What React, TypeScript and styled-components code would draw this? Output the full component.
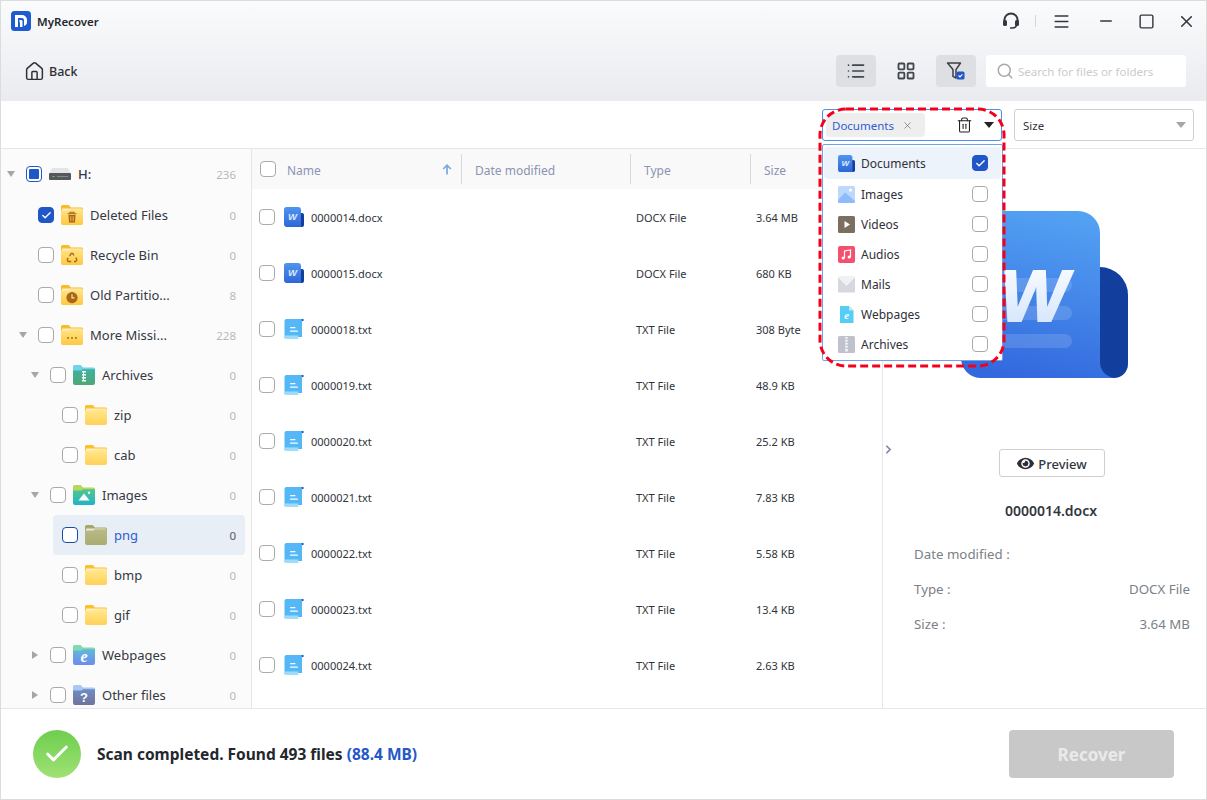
import { useId, type ReactNode } from "react";
import styled, { createGlobalStyle } from "styled-components";
import { Check, ChevronRight, House, LayoutGrid, List, Menu, Minus, Search, Square, Trash2, X } from "lucide-react";
import { FaEye } from "react-icons/fa";

const GlobalStyle = createGlobalStyle`
  * { box-sizing: border-box; }
  html, body { margin: 0; padding: 0; background: #fff; }
  body { font-family: "Noto Sans", "Open Sans", sans-serif; color: #2b2f38; }
`;

const Window = styled.div`
  position: relative;
  width: 1207px;
  height: 800px;
  display: flex;
  flex-direction: column;
  border: 1px solid #dcdcdc;
  overflow: hidden;
  background: #fff;
`;

const Header = styled.header`
  height: 100px;
  flex: none;
  background: linear-gradient(180deg, #fafbfc 0%, #e9ebef 100%);
`;

const TitleBar = styled.div`
  height: 40px;
  display: flex;
  align-items: center;
  padding-left: 10px;
`;

const Brand = styled.div`
  display: flex;
  align-items: center;
  gap: 6px;
  font-size: 11.5px;
  font-weight: 600;
  color: #25272e;
  flex: 1;
`;

const WinControls = styled.div`
  display: flex;
  align-items: center;
  color: #34373e;
  padding-right: 10px;
`;

const Separator = styled.span`
  width: 1px;
  height: 12px;
  background: #d4d6da;
  margin: 0 16px 0 15px;
`;

const ControlSlot = styled.span<{ $gap?: number }>`
  display: flex;
  margin-left: ${(p) => p.$gap ?? 0}px;
`;

const ToolBar = styled.div`
  height: 60px;
  display: flex;
  align-items: flex-start;
  padding: 14px 20px 0 23px;
`;

const BackLink = styled.div`
  display: flex;
  align-items: center;
  gap: 4px;
  font-size: 12.5px;
  font-weight: 500;
  color: #2e3038;
  height: 32px;
  flex: 1;
`;

const ViewButton = styled.button<{ $active?: boolean }>`
  width: 40px;
  height: 32px;
  margin-right: 10px;
  border: 0;
  padding: 0;
  border-radius: 4px;
  display: flex;
  align-items: center;
  justify-content: center;
  color: #43464d;
  background: ${(p) => (p.$active ? "#dddfe3" : "transparent")};
`;

const SearchBox = styled.div`
  width: 200px;
  height: 32px;
  background: #fff;
  border-radius: 3px;
  display: flex;
  align-items: center;
  gap: 4px;
  padding-left: 10px;
  font-size: 11.5px;
  color: #cbcbcb;
`;

const FilterBar = styled.div`
  position: relative;
  z-index: 3;
  height: 48px;
  flex: none;
  background: #fff;
  border-bottom: 1px solid #e6e6ea;
  display: flex;
  justify-content: flex-end;
  gap: 12px;
  padding: 8px 12px 0 0;
`;

const MultiSelectWrap = styled.div`
  position: relative;
  width: 180px;
`;

const SelectBox = styled.div<{ $open?: boolean }>`
  width: 180px;
  height: 32px;
  border: 1px solid ${(p) => (p.$open ? "#4a90ee" : "#cfcfcf")};
  border-radius: 3px;
  display: flex;
  align-items: center;
  padding: 0 7px 0 3px;
  font-size: 11.5px;
`;

const Tag = styled.div`
  width: 99px;
  height: 24px;
  flex: none;
  border-radius: 4px;
  background: #eeeeee;
  color: #2f5cd5;
  display: flex;
  align-items: center;
  justify-content: space-between;
  padding: 0 12px 0 6px;
  font-size: 11.5px;
`;

const TagClose = styled(X)`
  color: #6f6f6f;
`;

const TrashIcon = styled(Trash2)`
  margin-left: 31px;
  color: #222;
`;

const Caret = styled.span<{ $tone?: string }>`
  width: 0;
  height: 0;
  border-left: 5px solid transparent;
  border-right: 5px solid transparent;
  border-top: 6px solid ${(p) => p.$tone ?? "#222"};
`;

const BlackCaret = styled(Caret)`
  margin-left: 11px;
`;

const SizeText = styled.span`
  flex: 1;
  padding-left: 5px;
  color: #33363d;
`;

const Dropdown = styled.div`
  position: absolute;
  top: 35px;
  left: 0;
  width: 181px;
  height: 217px;
  background: #fff;
  border: 1px solid #6fa3ec;
  border-radius: 2px;
  padding: 2px 1px;
`;

const OptionRow = styled.div<{ $selected?: boolean }>`
  height: ${(p) => (p.$selected ? "32px" : "30px")};
  display: flex;
  align-items: center;
  gap: 6px;
  padding: 0 13px 0 14px;
  border-radius: 4px;
  font-size: 12px;
  color: #2e3038;
  background: ${(p) => (p.$selected ? "#edf3fb" : "transparent")};
`;

const OptionLabel = styled.span`
  flex: 1;
`;

const Annotation = styled.svg`
  position: absolute;
  left: -4px;
  top: -2px;
  pointer-events: none;
`;

const Body = styled.div`
  flex: 1;
  min-height: 0;
  display: flex;
  overflow: hidden;
`;

const TreePanel = styled.aside`
  width: 251px;
  flex: none;
  background: #fbfbfb;
  border-right: 1px solid #e6e6ea;
  padding-top: 5px;
`;

const TreeRow = styled.div<{ $level: number }>`
  height: 40px;
  flex: none;
  display: flex;
  align-items: center;
  padding-left: ${(p) => 6 + p.$level * 12}px;
  margin-bottom: ${(p) => (p.$level === 0 ? "1px" : "0")};
`;

const CaretSlot = styled.span`
  width: 10px;
  flex: none;
  display: flex;
`;

const GrayDown = styled.span`
  width: 0;
  height: 0;
  border-left: 4px solid transparent;
  border-right: 4px solid transparent;
  border-top: 6px solid #a6a6a6;
`;

const GrayRight = styled.span`
  width: 0;
  height: 0;
  margin-left: 1px;
  border-top: 4px solid transparent;
  border-bottom: 4px solid transparent;
  border-left: 6px solid #a6a6a6;
`;

const RowBody = styled.div<{ $selected?: boolean }>`
  flex: 1;
  min-width: 0;
  height: 40px;
  margin-right: 6px;
  display: flex;
  align-items: center;
  gap: 7px;
  padding: 0 9px;
  border-radius: 4px;
  background: ${(p) => (p.$selected ? "#e8eef6" : "transparent")};
`;

const TreeLabel = styled.span<{ $selected?: boolean; $strong?: boolean }>`
  flex: 1;
  font-size: 13px;
  white-space: nowrap;
  font-weight: ${(p) => (p.$strong ? 500 : 400)};
  color: ${(p) => (p.$selected ? "#2f5cd5" : "#343842")};
`;

const Count = styled.span<{ $selected?: boolean }>`
  font-size: 11.5px;
  color: ${(p) => (p.$selected ? "#55585f" : "#b9b9b9")};
`;

const Box = styled.span<{ $checked?: boolean; $partial?: boolean; $focus?: boolean }>`
  width: 16px;
  height: 16px;
  flex: none;
  border-radius: 4px;
  display: flex;
  align-items: center;
  justify-content: center;
  color: #fff;
  background: ${(p) => (p.$checked ? "#2056c8" : "#fff")};
  border: 1px solid
    ${(p) => (p.$checked || p.$partial ? "#2056c8" : p.$focus ? "#1c4aa8" : "#aaaaaa")};
`;

const BoxDot = styled.span`
  width: 10px;
  height: 10px;
  border-radius: 1px;
  background: #2056c8;
`;

const TablePanel = styled.section`
  width: 631px;
  flex: none;
  border-right: 1px solid #e6e6ea;
`;

const TableHead = styled.div`
  height: 40px;
  background: #f9f9f9;
  display: grid;
  grid-template-columns: 210px 169px 120px 1fr;
  font-size: 12px;
  color: #8b93b3;
`;

const HeadCell = styled.div<{ $first?: boolean }>`
  display: flex;
  align-items: center;
  padding-left: ${(p) => (p.$first ? "8px" : "13px")};
  gap: 11px;
  position: relative;
  &:not(:last-child)::after {
    content: "";
    position: absolute;
    right: 0;
    top: 5px;
    bottom: 5px;
    width: 1px;
    background: #d6d8de;
  }
`;

const HeadText = styled.span<{ $grow?: boolean }>`
  padding-top: 2px;
  flex: ${(p) => (p.$grow ? 1 : "none")};
`;

const SortArrow = styled.svg`
  margin-right: 10px;
`;

const FileRow = styled.div`
  height: 56px;
  display: grid;
  grid-template-columns: 384px 120px 1fr;
  align-items: center;
  font-size: 11px;
  color: #30343c;
`;

const NameCell = styled.div`
  display: flex;
  align-items: center;
  padding-left: 7px;
  gap: 9px;
`;

const FileName = styled.span`
  margin-left: -2px;
`;

const PreviewPanel = styled.section`
  position: relative;
  flex: 1;
  padding: 62px 16px 0 31px;
  display: flex;
  flex-direction: column;
  align-items: center;
`;

const BigIcon = styled.svg`
  margin-right: 15px;
  flex: none;
`;

const CollapseHandle = styled(ChevronRight)`
  position: absolute;
  left: -1px;
  top: 294px;
  color: #7b85a6;
`;

const PreviewButton = styled.button`
  width: 106px;
  height: 28px;
  margin-top: 71px;
  border: 1px solid #cfcfcf;
  border-radius: 3px;
  background: #fff;
  display: flex;
  align-items: center;
  justify-content: center;
  gap: 4px;
  font: 500 13px "Noto Sans", sans-serif;
  color: #33363d;
  padding: 1px 0 0;
`;

const PreviewName = styled.div`
  margin-top: 24px;
  margin-right: 2px;
  font-size: 14px;
  font-weight: 600;
  color: #33363d;
`;

const MetaList = styled.dl`
  width: 100%;
  margin: 16px 0 0;
  font-size: 13.3px;
  color: #7c7f87;
`;

const MetaRow = styled.div`
  height: 35px;
  display: flex;
  justify-content: space-between;
  align-items: center;
`;

const MetaTerm = styled.dt``;

const MetaValue = styled.dd`
  margin: 0;
`;

const Footer = styled.footer`
  height: 91px;
  flex: none;
  border-top: 1px solid #e6e6ea;
  display: flex;
  align-items: center;
  padding: 0 32px;
`;

const SuccessBadge = styled.span`
  width: 48px;
  height: 48px;
  border-radius: 50%;
  background: linear-gradient(180deg, #6dce4e 0%, #9fe274 100%);
  display: flex;
  align-items: center;
  justify-content: center;
  color: #fff;
`;

const Status = styled.div`
  flex: 1;
  margin-left: 16px;
  font-size: 15.5px;
  font-weight: 700;
  color: #24272e;
`;

const StatusSize = styled.span`
  color: #2458c8;
`;

const RecoverButton = styled.button`
  width: 165px;
  height: 48px;
  border: 0;
  padding: 1px 0 0;
  border-radius: 4px;
  background: #c8c8c8;
  color: #eaeaea;
  font: 700 17px "Noto Sans", sans-serif;
`;

const Logo = () => (
  <svg width="20" height="20" viewBox="0 0 20 20">
    <rect width="20" height="20" rx="3.5" fill="#1f5bd0" />
    <path d="M4 4h7a5 5 0 0 1 5 5v2a4 4 0 0 1-3 3.9V9a2 2 0 0 0-2-2H7v9H4z" fill="#fff" />
    <path d="M8.5 9h1.6a1.4 1.4 0 0 1 1.4 1.4V16H9v-4.6H8.5z" fill="#fff" />
  </svg>
);

const Headset = () => (
  <svg width="18" height="18" viewBox="0 0 18 18" fill="none">
    <path d="M2.4 9.5V8a6.6 6.6 0 0 1 13.2 0v1.5" stroke="#34373e" strokeWidth="2" />
    <rect x="1" y="8" width="4" height="6" rx="1.6" fill="#34373e" />
    <rect x="13" y="8" width="4" height="6" rx="1.6" fill="#34373e" />
    <path d="M14.5 13.5c-.6 1.6-2 2.5-4 2.5H8" stroke="#34373e" strokeWidth="1.6" />
  </svg>
);

const FilterChecked = () => (
  <svg width="20" height="20" viewBox="0 0 20 20" fill="none">
    <path d="M1.5 2h13L10 8.6V17l-3-1.6V8.6z" stroke="#3c3f46" strokeWidth="1.5" strokeLinejoin="round" />
    <rect x="10.5" y="10.5" width="8" height="8" rx="1.6" fill="#2056c8" />
    <path d="M12.6 14.5l1.4 1.4 2.4-2.6" stroke="#fff" strokeWidth="1.1" />
  </svg>
);

const Drive = () => (
  <svg width="22" height="12" viewBox="0 0 22 12">
    <path d="M3 0h16l3 6H0z" fill="#e4e5e7" />
    <rect y="5" width="22" height="7" rx="1" fill="#55575c" />
    <rect x="3.5" y="8" width="2" height="1" fill="#58d65f" />
    <rect x="8" y="8" width="11" height="1" fill="#85878c" />
  </svg>
);

type FolderProps = { tab: string; top: string; bottom: string; sheet?: boolean; children?: ReactNode };

const Folder = ({ tab, top, bottom, sheet = true, children }: FolderProps) => {
  const id = useId();
  return (
    <svg width="22" height="20" viewBox="0 0 22 20" style={{ flex: "none" }}>
      <defs>
        <linearGradient id={id} x1="0" y1="0" x2="0" y2="1">
          <stop offset="0" stopColor={top} />
          <stop offset="1" stopColor={bottom} />
        </linearGradient>
      </defs>
      <path d="M1.5 0h6.2l2.3 2.5h10.5A1.5 1.5 0 0 1 22 4v3H0V1.5A1.5 1.5 0 0 1 1.5 0z" fill={tab} />
      {sheet && <rect x="1" y="3.5" width="20" height="3" rx="0.6" fill="#fff" opacity="0.75" />}
      <path d="M0 5.5h8.5l1.2-1.3H22V18a2 2 0 0 1-2 2H2a2 2 0 0 1-2-2z" fill={`url(#${id})`} />
      {children}
    </svg>
  );
};

const yellow = { tab: "#fcbc27", top: "#ffe487", bottom: "#ffc83f" };
const plain = { tab: "#fdbf2d", top: "#ffe98f", bottom: "#ffd157" };

const treeIcons: Record<string, ReactNode> = {
  deleted: (
    <Folder {...yellow}>
      <path d="M6.5 8.8h9M9 8.8V7.2h4v1.6" stroke="#a9651c" strokeWidth="1.1" fill="none" />
      <path d="M7.5 10h7l-.5 7.5H8z" fill="#a9651c" />
      <path d="M9.8 11.2v5M12.2 11.2v5" stroke="#ffd66b" strokeWidth="0.8" />
    </Folder>
  ),
  recycle: (
    <Folder {...yellow}>
      <path d="M8.6 11.2L10.2 8.5h1.6l1.2 2M14.8 12.6l1 2.2-1 1.7h-1.8M10.2 16.5H7.2l-1-1.7 1-2" stroke="#a9651c" strokeWidth="1.3" fill="none" />
    </Folder>
  ),
  clock: (
    <Folder {...yellow}>
      <circle cx="11" cy="12.6" r="5.6" fill="#a9651c" />
      <path d="M11 9.2v3.6h2.6" stroke="#ffe08a" strokeWidth="1.2" fill="none" />
    </Folder>
  ),
  more: (
    <Folder {...yellow}>
      <rect x="6.2" y="12" width="1.8" height="1.8" rx="0.4" fill="#a9651c" />
      <rect x="10.1" y="12" width="1.8" height="1.8" rx="0.4" fill="#a9651c" />
      <rect x="14" y="12" width="1.8" height="1.8" rx="0.4" fill="#a9651c" />
    </Folder>
  ),
  archives: (
    <Folder tab="#6fd3ea" top="#3fb1a0" bottom="#4fa775" sheet={false}>
      <path d="M9 6h4v1.6H11v1.4h2v1.6h-2V12h2v1.6h-2V15h2v1.6H9V15h1v-1.4H9V12h1v-1.4H9V9h1V7.6H9z" fill="#fff" />
    </Folder>
  ),
  images: (
    <Folder tab="#b5d85f" top="#54c58e" bottom="#1fb4c6" sheet={false}>
      <path d="M5.5 15.5L11 8.5l5.5 7z" fill="#fff" />
      <circle cx="16" cy="7.8" r="1.2" fill="#fff" />
    </Folder>
  ),
  webpages: (
    <Folder tab="#83d9b3" top="#62b9d6" bottom="#6e8cee" sheet={false}>
      <text x="11" y="17" textAnchor="middle" fontFamily="Liberation Serif" fontStyle="italic" fontWeight="700" fontSize="16" fill="#fff">e</text>
    </Folder>
  ),
  other: (
    <Folder tab="#a9c8f2" top="#6f8bc6" bottom="#70749a" sheet={false}>
      <text x="11" y="17" textAnchor="middle" fontFamily="Liberation Sans" fontWeight="700" fontSize="13" fill="#fff">?</text>
    </Folder>
  ),
  folder: <Folder {...plain} />,
  folderActive: <Folder tab="#a8a66c" top="#b9bb85" bottom="#a8ab72" />,
};

const WordSmall = ({ size }: { size: number }) => {
  const id = useId();
  return (
    <svg width={size} height={size} viewBox="0 0 20 20" style={{ flex: "none" }}>
      <defs>
        <linearGradient id={id} x1="0" y1="0" x2="0" y2="1">
          <stop offset="0" stopColor="#4f95ef" />
          <stop offset="1" stopColor="#2f66d8" />
        </linearGradient>
      </defs>
      <rect x="15" y="6" width="5" height="14" rx="2" fill="#123f9e" />
      <path d="M2.5 0h11.5a3 3 0 0 1 3 3v17H3a3 3 0 0 1-3-3V2.5A2.5 2.5 0 0 1 2.5 0z" fill={`url(#${id})`} />
      <text x="8.5" y="12.5" textAnchor="middle" fontFamily="Liberation Sans" fontStyle="italic" fontWeight="700" fontSize="9.5" fill="#dfeafc">W</text>
    </svg>
  );
};

const TxtIcon = () => (
  <svg width="20" height="20" viewBox="0 0 20 20" style={{ flex: "none" }}>
    <path d="M2.5 0H19a1 1 0 0 1-1 2v16H2a2 2 0 0 1-1.5-2V2a2 2 0 0 1 2-2z" fill="#54b8f8" />
    <rect x="17.6" y="0" width="2" height="2" rx="0.8" fill="#2056c8" />
    <path d="M0 16.4h14.6a2 2 0 0 0 1 3.6H2a2 2 0 0 1-2-2z" fill="#9fdcfb" />
    <rect x="6" y="8" width="5.5" height="1.3" rx="0.6" fill="#fff" />
    <rect x="6" y="11.4" width="8" height="1.3" rx="0.6" fill="#fff" />
  </svg>
);

const OptionIcon = ({ kind }: { kind: string }) => {
  const paint: Record<string, ReactNode> = {
    Documents: <WordSmall size={17} />,
    Images: (
      <svg width="17" height="17" viewBox="0 0 17 17">
        <rect width="17" height="17" rx="1.5" fill="#bcd9fd" />
        <path d="M0 14l7-7.5L17 15v.5a1.5 1.5 0 0 1-1.5 1.5h-14A1.5 1.5 0 0 1 0 15.5z" fill="#8ebcfb" />
        <circle cx="12.5" cy="4" r="1.6" fill="#fff" />
      </svg>
    ),
    Videos: (
      <svg width="17" height="17" viewBox="0 0 17 17">
        <rect width="17" height="17" rx="1.5" fill="#7b6f60" />
        <path d="M6.5 5l5.5 3.5L6.5 12z" fill="#fff" />
      </svg>
    ),
    Audios: (
      <svg width="17" height="17" viewBox="0 0 17 17">
        <rect width="17" height="17" rx="2" fill="#f4506f" />
        <path d="M6.5 12V5l6-1v7" stroke="#fff" strokeWidth="1.2" fill="none" />
        <circle cx="5.2" cy="12" r="1.6" fill="#fff" />
        <circle cx="11.2" cy="11" r="1.6" fill="#fff" />
      </svg>
    ),
    Mails: (
      <svg width="17" height="17" viewBox="0 0 17 17">
        <rect y="0.5" width="17" height="16" rx="1" fill="#d5d8df" />
        <path d="M0 1h17L8.5 9.5z" fill="#eef0f3" stroke="#fafbfc" strokeWidth="0.6" />
      </svg>
    ),
    Webpages: (
      <svg width="17" height="17" viewBox="0 0 17 17">
        <path d="M2 0h9l4.5 4.5V17H2z" fill="#56cdf5" />
        <path d="M11 0l4.5 4.5H11z" fill="#bdeafb" />
        <text x="8.8" y="13" textAnchor="middle" fontFamily="Liberation Serif" fontStyle="italic" fontWeight="700" fontSize="11" fill="#fff">e</text>
      </svg>
    ),
    Archives: (
      <svg width="17" height="17" viewBox="0 0 17 17">
        <rect width="17" height="17" rx="1.5" fill="#bfc2cd" />
        <path d="M7 1h3v1.6H8.5V4H10v1.6H8.5V7H10v1.6H8.5V10H10v1.6H8.5V13H10v2.5H7V13h.8v-1.4H7V10h.8V8.6H7V7h.8V5.6H7V4h.8V2.6H7z" fill="#eceef2" />
      </svg>
    ),
  };
  return <>{paint[kind]}</>;
};

const WordLarge = () => {
  const body = useId();
  const letter = useId();
  return (
    <BigIcon width="167" height="167" viewBox="0 0 167 167">
      <defs>
        <linearGradient id={body} x1="0.6" y1="0" x2="0.4" y2="1">
          <stop offset="0" stopColor="#53a1f3" />
          <stop offset="1" stopColor="#3369de" />
        </linearGradient>
        <linearGradient id={letter} x1="0" y1="0" x2="0" y2="1">
          <stop offset="0" stopColor="#ffffff" />
          <stop offset="1" stopColor="#cfe2fb" />
        </linearGradient>
      </defs>
      <path d="M139 56a28 28 0 0 1 28 28v69a14 14 0 0 1-14 14h-14z" fill="#123f9e" />
      <path d="M20 0h97a22 22 0 0 1 22 22v129c0 8 5 14 14 16H20a20 20 0 0 1-20-20V20A20 20 0 0 1 20 0z" fill={`url(#${body})`} />
      <rect x="20" y="67" width="91" height="14" rx="7" fill="#fff" opacity="0.14" />
      <rect x="20" y="95" width="91" height="14" rx="7" fill="#fff" opacity="0.14" />
      <rect x="20" y="123" width="91" height="14" rx="7" fill="#fff" opacity="0.14" />
      <text x="107" y="110" textAnchor="end" fontFamily="Liberation Sans" fontStyle="italic" fontWeight="700" fontSize="72" fill={`url(#${letter})`} stroke={`url(#${letter})`} strokeWidth="2">W</text>
    </BigIcon>
  );
};

type TreeItem = {
  level: number;
  label: string;
  count: number;
  icon: string;
  caret?: "down" | "right";
  checked?: boolean;
  partial?: boolean;
  selected?: boolean;
};

const treeItems: TreeItem[] = [
  { level: 0, label: "H:", count: 236, icon: "drive", caret: "down", partial: true },
  { level: 1, label: "Deleted Files", count: 0, icon: "deleted", checked: true },
  { level: 1, label: "Recycle Bin", count: 0, icon: "recycle" },
  { level: 1, label: "Old Partitio...", count: 8, icon: "clock" },
  { level: 1, label: "More Missi...", count: 228, icon: "more", caret: "down" },
  { level: 2, label: "Archives", count: 0, icon: "archives", caret: "down" },
  { level: 3, label: "zip", count: 0, icon: "folder" },
  { level: 3, label: "cab", count: 0, icon: "folder" },
  { level: 2, label: "Images", count: 0, icon: "images", caret: "down" },
  { level: 3, label: "png", count: 0, icon: "folderActive", selected: true },
  { level: 3, label: "bmp", count: 0, icon: "folder" },
  { level: 3, label: "gif", count: 0, icon: "folder" },
  { level: 2, label: "Webpages", count: 0, icon: "webpages", caret: "right" },
  { level: 2, label: "Other files", count: 0, icon: "other", caret: "right" },
];

const files = [
  { name: "0000014.docx", type: "DOCX File", size: "3.64 MB" },
  { name: "0000015.docx", type: "DOCX File", size: "680 KB" },
  { name: "0000018.txt", type: "TXT File", size: "308 Byte" },
  { name: "0000019.txt", type: "TXT File", size: "48.9 KB" },
  { name: "0000020.txt", type: "TXT File", size: "25.2 KB" },
  { name: "0000021.txt", type: "TXT File", size: "7.83 KB" },
  { name: "0000022.txt", type: "TXT File", size: "5.58 KB" },
  { name: "0000023.txt", type: "TXT File", size: "13.4 KB" },
  { name: "0000024.txt", type: "TXT File", size: "2.63 KB" },
];

const categories = ["Documents", "Images", "Videos", "Audios", "Mails", "Webpages", "Archives"];

const App = () => {
  return (
    <Window>
      <GlobalStyle />
      <Header>
        <TitleBar>
          <Brand>
            <Logo />
            MyRecover
          </Brand>
          <WinControls>
            <Headset />
            <Separator />
            <ControlSlot>
              <Menu size={19} strokeWidth={1.9} />
            </ControlSlot>
            <ControlSlot $gap={26}>
              <Minus size={18} strokeWidth={2} />
            </ControlSlot>
            <ControlSlot $gap={23}>
              <Square size={17} strokeWidth={2} />
            </ControlSlot>
            <ControlSlot $gap={22}>
              <X size={19} strokeWidth={2} />
            </ControlSlot>
          </WinControls>
        </TitleBar>
        <ToolBar>
          <BackLink>
            <House size={21} strokeWidth={1.7} />
            Back
          </BackLink>
          <ViewButton $active>
            <List size={20} strokeWidth={2} />
          </ViewButton>
          <ViewButton>
            <LayoutGrid size={20} strokeWidth={2.2} />
          </ViewButton>
          <ViewButton $active>
            <FilterChecked />
          </ViewButton>
          <SearchBox>
            <Search size={18} strokeWidth={2} color="#a9a9a9" />
            Search for files or folders
          </SearchBox>
        </ToolBar>
      </Header>

      <FilterBar>
        <MultiSelectWrap>
          <SelectBox $open>
            <Tag>
              Documents
              <TagClose size={11} strokeWidth={1.6} />
            </Tag>
            <TrashIcon size={18} strokeWidth={1.5} />
            <BlackCaret />
          </SelectBox>
          <Dropdown>
            {categories.map((c, i) => (
              <OptionRow key={c} $selected={i === 0}>
                <OptionIcon kind={c} />
                <OptionLabel>{c}</OptionLabel>
                <Box $checked={i === 0}>{i === 0 && <Check size={11} strokeWidth={3} />}</Box>
              </OptionRow>
            ))}
          </Dropdown>
          <Annotation width="188" height="262" viewBox="0 0 188 262" fill="none">
            <rect x="2" y="2" width="184" height="257" rx="26" stroke="#f5001c" strokeWidth="3" strokeDasharray="8 4" />
          </Annotation>
        </MultiSelectWrap>
        <SelectBox>
          <SizeText>Size</SizeText>
          <Caret $tone="#a6a6a6" />
        </SelectBox>
      </FilterBar>

      <Body>
        <TreePanel>
          {treeItems.map((t) => (
            <TreeRow key={t.label} $level={t.level}>
              <CaretSlot>
                {t.caret === "down" && <GrayDown />}
                {t.caret === "right" && <GrayRight />}
              </CaretSlot>
              <RowBody $selected={t.selected}>
                <Box $checked={t.checked} $partial={t.partial} $focus={t.selected}>
                  {t.checked && <Check size={11} strokeWidth={3} />}
                  {t.partial && <BoxDot />}
                </Box>
                {t.icon === "drive" ? <Drive /> : treeIcons[t.icon]}
                <TreeLabel $selected={t.selected} $strong={t.level === 0}>
                  {t.label}
                </TreeLabel>
                <Count $selected={t.selected}>{t.count}</Count>
              </RowBody>
            </TreeRow>
          ))}
        </TreePanel>

        <TablePanel>
          <TableHead>
            <HeadCell $first>
              <Box />
              <HeadText $grow>Name</HeadText>
              <SortArrow width="10" height="11" viewBox="0 0 10 11" fill="none">
                <path d="M5 10.5V1.5M1.2 5L5 1.2 8.8 5" stroke="#7ea6dc" strokeWidth="1.7" />
              </SortArrow>
            </HeadCell>
            <HeadCell>
              <HeadText>Date modified</HeadText>
            </HeadCell>
            <HeadCell>
              <HeadText>Type</HeadText>
            </HeadCell>
            <HeadCell>
              <HeadText>Size</HeadText>
            </HeadCell>
          </TableHead>
          {files.map((f) => (
            <FileRow key={f.name}>
              <NameCell>
                <Box />
                {f.name.endsWith("docx") ? <WordSmall size={20} /> : <TxtIcon />}
                <FileName>{f.name}</FileName>
              </NameCell>
              <span>{f.type}</span>
              <span>{f.size}</span>
            </FileRow>
          ))}
        </TablePanel>

        <PreviewPanel>
          <CollapseHandle size={13} strokeWidth={3.2} />
          <WordLarge />
          <PreviewButton>
            <FaEye size={17} color="#2b2f38" />
            Preview
          </PreviewButton>
          <PreviewName>0000014.docx</PreviewName>
          <MetaList>
            <MetaRow>
              <MetaTerm>Date modified :</MetaTerm>
              <MetaValue />
            </MetaRow>
            <MetaRow>
              <MetaTerm>Type :</MetaTerm>
              <MetaValue>DOCX File</MetaValue>
            </MetaRow>
            <MetaRow>
              <MetaTerm>Size :</MetaTerm>
              <MetaValue>3.64 MB</MetaValue>
            </MetaRow>
          </MetaList>
        </PreviewPanel>
      </Body>

      <Footer>
        <SuccessBadge>
          <Check size={28} strokeWidth={2.6} />
        </SuccessBadge>
        <Status>
          Scan completed. Found 493 files <StatusSize>(88.4 MB)</StatusSize>
        </Status>
        <RecoverButton>Recover</RecoverButton>
      </Footer>
    </Window>
  );
};

export default App;
